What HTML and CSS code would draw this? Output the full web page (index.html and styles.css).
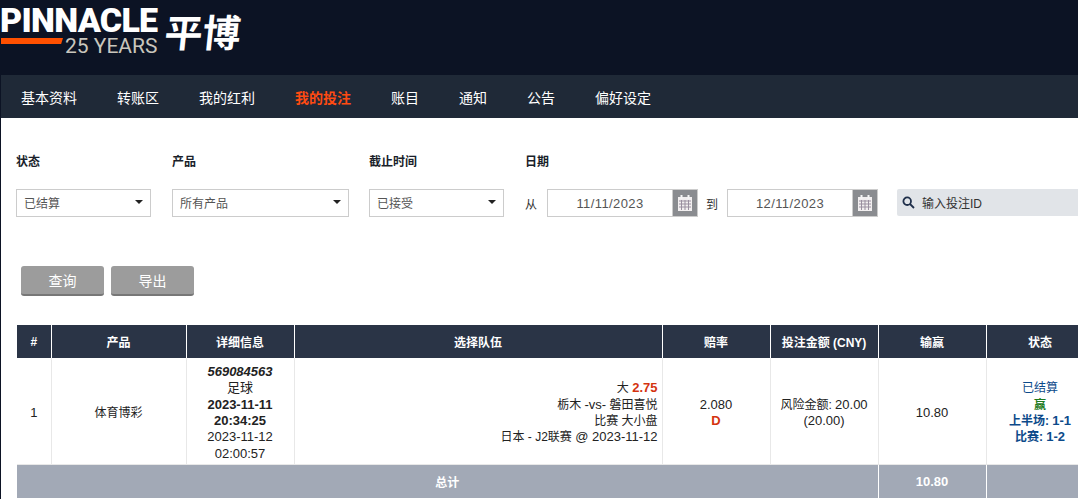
FILE: index.html
```html
<!DOCTYPE html>
<html lang="zh-CN">
<head>
  <meta charset="UTF-8">
  <title>我的投注</title>
  <link rel="stylesheet" href="styles.css">
</head>
<body>
  <div class="page">
    <div class="header">
      <div class="logo">
        <div class="logo-en">
          <div class="logo-word">PINNACLE</div>
          <div class="logo-sub">
            <span class="logo-bar"></span>
            <span class="logo-years">25 YEARS</span>
          </div>
        </div>
        <div class="logo-cn">平博</div>
      </div>
    </div>

    <div class="nav">
      <a href="#">基本资料</a>
      <a href="#">转账区</a>
      <a href="#">我的红利</a>
      <a href="#" class="active">我的投注</a>
      <a href="#">账目</a>
      <a href="#">通知</a>
      <a href="#">公告</a>
      <a href="#">偏好设定</a>
    </div>

    <div class="content">
      <div class="filters">
        <div class="field field-status">
          <label>状态</label>
          <div class="select">已结算<span class="caret"></span></div>
        </div>
        <div class="field field-product">
          <label>产品</label>
          <div class="select">所有产品<span class="caret"></span></div>
        </div>
        <div class="field field-cutoff">
          <label>截止时间</label>
          <div class="select">已接受<span class="caret"></span></div>
        </div>
        <div class="field field-date">
          <label>日期</label>
          <div class="date-row">
            <span class="date-label">从</span>
            <div class="date-input">11/11/2023</div>
            <div class="date-btn">
              <svg width="16" height="18" viewBox="0 0 16 18"><path class="cal-body" d="M1 3h14v14H1z"/><path class="cal-ring" d="M3.5 1h2v4h-2zM10.5 1h2v4h-2z"/><path class="cal-grid" d="M2 7h12M2 10h12M2 13h12M4.5 6v10M8 6v10M11.500 6v10"/></svg>
            </div>
            <span class="date-label date-to">到</span>
            <div class="date-input">12/11/2023</div>
            <div class="date-btn">
              <svg width="16" height="18" viewBox="0 0 16 18"><path class="cal-body" d="M1 3h14v14H1z"/><path class="cal-ring" d="M3.5 1h2v4h-2zM10.5 1h2v4h-2z"/><path class="cal-grid" d="M2 7h12M2 10h12M2 13h12M4.5 6v10M8 6v10M11.500 6v10"/></svg>
            </div>
          </div>
        </div>
        <div class="search">
          <svg width="13" height="13" viewBox="0 0 13 13"><circle cx="5.200" cy="5.200" r="3.800"/><path d="M8 8l4 4"/></svg>
          <span>输入投注ID</span>
        </div>
      </div>

      <div class="actions">
        <button class="btn">查询</button>
        <button class="btn">导出</button>
      </div>

      <table class="bets">
        <colgroup>
          <col class="c-num"><col class="c-prod"><col class="c-info"><col class="c-sel">
          <col class="c-std"><col class="c-std"><col class="c-std"><col class="c-std">
        </colgroup>
        <thead>
          <tr>
            <th>#</th><th>产品</th><th>详细信息</th><th>选择队伍</th>
            <th>赔率</th><th>投注金额 (CNY)</th><th>输赢</th><th>状态</th>
          </tr>
        </thead>
        <tbody>
          <tr>
            <td><span class="num">1</span></td>
            <td>体育博彩</td>
            <td>
              <b class="num"><i>569084563</i></b><br>
              <span class="num">足球</span><br>
              <b class="num">2023-11-11<br>20:34:25</b><br>
              <span class="num">2023-11-12<br>02:00:57</span>
            </td>
            <td class="sel">
              大 <b class="red num">2.75</b><br>
              栃木 <span class="num">-vs-</span> 磐田喜悦<br>
              比赛 大小盘<br>
              日本 - J2联赛 <span class="num">@ 2023-11-12</span>
            </td>
            <td><span class="num">2.080</span><br><b class="red num">D</b></td>
            <td>风险金额: <span class="num">20.00<br>(20.00)</span></td>
            <td><span class="num">10.80</span></td>
            <td class="state">
              已结算<br>
              <b class="win">赢</b><br>
              <b>上半场: <span class="num">1-1</span></b><br>
              <b>比赛: <span class="num">1-2</span></b>
            </td>
          </tr>
        </tbody>
        <tfoot>
          <tr>
            <td colspan="6">总计</td>
            <td><span class="num">10.80</span></td>
            <td></td>
          </tr>
        </tfoot>
      </table>
    </div>
  </div>
</body>
</html>
```

FILE: styles.css
```css
html, body {
  margin: 0;
  overflow: hidden;
}
body {
  font-family: "Liberation Sans", "Noto Sans CJK SC", sans-serif;
  font-size: 12px;
  color: #222;
  background-color: #fff;
}
.page {
  width: 1200px;
  min-height: 100vh;
  border-left: 1px solid #0c1324;
}
.header {
  height: 75px;
  background-color: #0c1324;
  margin-left: -1px;
}
.logo {
  display: flex;
}
.logo-en {
  width: 165px;
  padding-top: 3px;
}
.logo-word {
  font-family: Roboto, sans-serif;
  font-weight: 900;
  font-size: 34px;
  line-height: 34px;
  letter-spacing: -0.700px;
  color: #fff;
  white-space: nowrap;
}
.logo-sub {
  display: flex;
}
.logo-bar {
  width: 62px;
  height: 6px;
  margin: 1px 2px 0 1px;
  background-color: #ff5000;
  clip-path: polygon(0 0, 100% 0, 97% 100%, 0 100%);
}
.logo-years {
  font-family: Roboto, sans-serif;
  font-size: 21px;
  line-height: 18px;
  color: #c9c6bd;
  white-space: nowrap;
}
.logo-cn {
  font-family: "Noto Sans CJK SC", sans-serif;
  font-weight: 700;
  font-size: 38px;
  line-height: 62px;
  color: #fff;
  transform: skewX(-6deg);
}
.nav {
  display: flex;
  gap: 40px;
  height: 43px;
  padding-left: 20px;
  background-color: #1f2937;
  align-items: center;
}
.nav a {
  color: #fff;
  font-size: 14px;
  text-decoration: none;
}
.nav a.active {
  color: #ff4b12;
  font-weight: bold;
}
.content {
  padding: 36px 0 0 15px;
}
.filters {
  display: flex;
  height: 63px;
}
.field label {
  display: block;
  height: 35px;
  line-height: 16px;
  font-weight: bold;
  color: #1a1f2b;
}
.field-status { width: 156px; }
.field-product { width: 197px; }
.field-cutoff { width: 156px; }
.field-date { width: 372px; }
.select {
  position: relative;
  box-sizing: border-box;
  height: 28px;
  line-height: 28px;
  padding-left: 7px;
  border: 1px solid #ccc;
  color: #555;
}
.field-status .select, .field-cutoff .select { width: 135px; }
.field-product .select { width: 177px; }
.caret {
  position: absolute;
  right: 7px;
  top: 10px;
  border-style: solid;
  border-width: 4px 4px 0;
  border-color: #222 transparent transparent;
}
.date-row {
  display: flex;
  align-items: center;
  height: 28px;
}
.date-label {
  width: 22px;
  color: #333;
}
.date-to {
  width: 22px;
  margin-left: 8px;
  margin-right: -1px;
}
.date-input {
  box-sizing: border-box;
  width: 126px;
  height: 28px;
  line-height: 27px;
  text-align: center;
  font-size: 13px;
  letter-spacing: 0.400px;
  color: #555;
  border: 1px solid #ccc;
}
.date-btn {
  display: flex;
  align-items: center;
  justify-content: center;
  box-sizing: border-box;
  width: 25px;
  height: 28px;
  background-color: #8a8c90;
  border: 1px solid #ccc;
  border-left: 0;
}
.cal-body { fill: #f2eff0; }
.cal-ring { fill: #f6f6f6; }
.cal-grid { stroke: #9a8fa0; stroke-width: 1; fill: none; }
.search {
  display: flex;
  align-items: center;
  gap: 7px;
  box-sizing: border-box;
  width: 300px;
  height: 27px;
  margin-top: 35px;
  padding-left: 5px;
  background-color: #e1e4e8;
  border-radius: 2px;
  color: #333;
}
.search svg {
  fill: none;
  stroke: #1f2f4a;
  stroke-width: 1.800;
}
.actions {
  display: flex;
  gap: 7px;
  margin-top: 49px;
  padding-left: 5px;
}
.btn {
  width: 83px;
  height: 30px;
  padding: 0;
  font-family: inherit;
  font-size: 14px;
  color: #fff;
  background-color: #9c9c9c;
  border: 0;
  border-bottom: 2px solid #777;
  border-radius: 3px;
}
.bets {
  width: 1077px;
  margin: 29px 0 0 1px;
  border-collapse: collapse;
  table-layout: fixed;
  text-align: center;
}
.c-num { width: 34px; }
.c-prod { width: 135px; }
.c-info { width: 108px; }
.c-sel { width: 368px; }
.c-std { width: 108px; }
.bets th {
  height: 33px;
  padding: 0;
  color: #fff;
  background-color: #2a3446;
  border-right: 1px solid #fff;
}
.bets tbody td {
  height: 102px;
  padding: 4px 4px 0;
  line-height: 16.400px;
  border-right: 1px solid #e8e8e8;
  border-bottom: 1px solid #e8e8e8;
}
.num {
  font-size: 13px;
}
.bets td.sel {
  text-align: right;
}
.red {
  color: #d4330f;
}
.state {
  color: #0c4a8a;
}
.win {
  color: #1d7a1d;
}
.bets tfoot td {
  height: 33px;
  padding: 0;
  font-weight: bold;
  color: #fff;
  background-color: #a2a9b6;
  border-right: 1px solid #fff;
}
```
